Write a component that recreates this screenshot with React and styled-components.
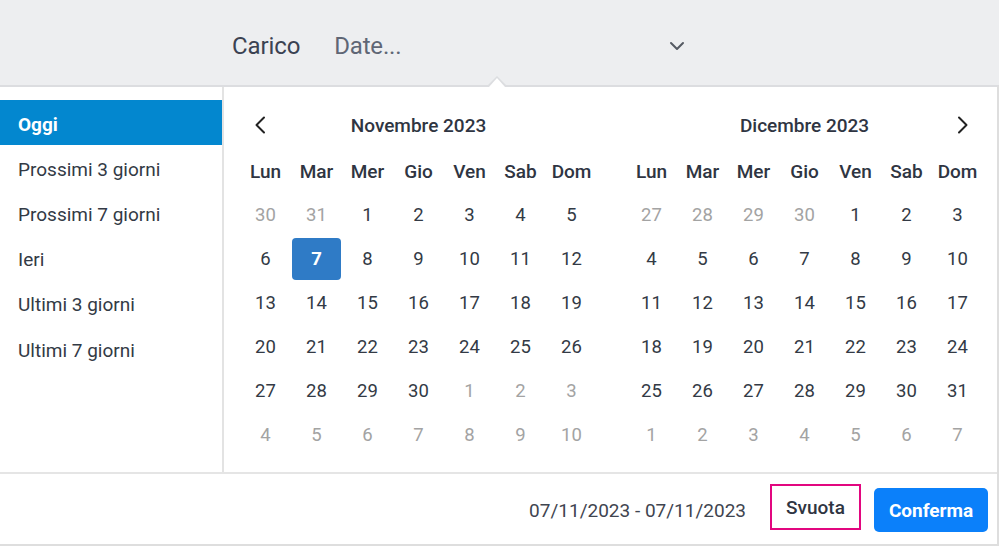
import React from "react";
import styled, { createGlobalStyle } from "styled-components";

const Global = createGlobalStyle`
  html, body { margin: 0; padding: 0; background: #ffffff; }
  body { font-family: Roboto, "Liberation Sans", Arial, sans-serif; }
  * { box-sizing: border-box; }
`;

const Page = styled.div`
  width: 999px;
  height: 549px;
  overflow: hidden;
  background: #ffffff;
`;

const TopBar = styled.div`
  height: 85px;
  background: #edeef0;
  display: flex;
  align-items: center;
  padding: 6px 0 0 232px;
`;

const FieldLabel = styled.span`
  font-size: 24px;
  color: #3b4252;
  margin-right: 34px;
  letter-spacing: -0.1px;
`;

const Select = styled.div`
  width: 352px;
  display: flex;
  align-items: center;
  justify-content: space-between;
  padding-right: 1px;
`;

const Placeholder = styled.span`
  font-size: 24px;
  color: #5f6675;
  letter-spacing: -0.2px;
`;

const Popup = styled.div`
  position: relative;
  width: 999px;
  border-top: 2px solid #dcdde0;
  border-right: 2px solid #dedede;
  border-bottom: 2px solid #dedede;
  background: #ffffff;
`;

const Caret = styled.div`
  position: absolute;
  left: 487px;
  top: -11px;
  width: 0;
  height: 0;
  border-left: 10px solid transparent;
  border-right: 10px solid transparent;
  border-bottom: 10px solid #dcdde0;

  &::after {
    content: "";
    position: absolute;
    left: -8px;
    top: 2px;
    border-left: 8px solid transparent;
    border-right: 8px solid transparent;
    border-bottom: 9px solid #ffffff;
  }
`;

const Body = styled.div`
  display: flex;
  height: 385px;
`;

const Sidebar = styled.ul`
  list-style: none;
  margin: 0;
  padding: 13px 0 0 0;
  width: 224px;
  flex: 0 0 224px;
  border-right: 2px solid #e3e3e3;
`;

const RangeItem = styled.li`
  height: 45.2px;
  display: flex;
  align-items: center;
  padding: 3px 0 0 18px;
  font-size: 19px;
  color: ${(p) => (p.$active ? "#ffffff" : "#333a45")};
  background: ${(p) => (p.$active ? "#0387cf" : "transparent")};
  font-weight: ${(p) => (p.$active ? 700 : 400)};
`;

const Calendars = styled.div`
  display: flex;
  gap: 29px;
  padding: 13px 0 0 16px;
`;

const Month = styled.div`
  width: 357px;
`;

const MonthHeader = styled.div`
  height: 50px;
  display: grid;
  grid-template-columns: 40px 1fr 40px;
  align-items: center;
`;

const MonthTitle = styled.div`
  text-align: center;
  font-size: 19px;
  font-weight: 500;
  color: #2f3542;
`;

const NavButton = styled.button`
  border: none;
  background: none;
  padding: 0;
  width: 40px;
  height: 40px;
  display: flex;
  align-items: center;
  justify-content: center;
  color: #222;
  cursor: pointer;
`;

const Grid = styled.div`
  display: grid;
  grid-template-columns: repeat(7, 51px);
`;

const DayName = styled.div`
  height: 43px;
  display: flex;
  align-items: center;
  justify-content: center;
  font-size: 19px;
  font-weight: 500;
  color: #2f3542;
`;

const Day = styled.div`
  display: flex;
  align-items: center;
  justify-content: center;
  font-size: 18.5px;
  color: ${(p) => (p.$selected ? "#ffffff" : p.$muted ? "#a3a3a3" : "#333a45")};
  background: ${(p) => (p.$selected ? "#2f7bc6" : "transparent")};
  font-weight: ${(p) => (p.$selected ? 700 : 400)};
  border-radius: 4px;
  margin: ${(p) => (p.$selected ? "1px" : "0")};
  height: ${(p) => (p.$selected ? "42px" : "44px")};
`;

const Footer = styled.div`
  height: 72px;
  border-top: 2px solid #e5e5e5;
  display: flex;
  align-items: center;
  justify-content: flex-end;
  padding-right: 9px;
`;

const RangeText = styled.span`
  font-size: 19px;
  color: #3f4550;
  margin-right: 24px;
  padding-top: 2px;
`;

const ClearButton = styled.button`
  height: 46px;
  width: 91px;
  border: 2px solid #e2067f;
  background: #ffffff;
  font-family: inherit;
  font-size: 19px;
  font-weight: 500;
  color: #2f3542;
  margin-right: 13px;
  padding: 0;
  margin-top: -4px;
`;

const ConfirmButton = styled.button`
  height: 44px;
  width: 114px;
  border: none;
  border-radius: 5px;
  background: #0b80fa;
  font-family: inherit;
  font-size: 19px;
  font-weight: 700;
  color: #ffffff;
  padding: 0;
  margin-top: 2px;
`;

const Chevron = ({ dir }) => (
  <svg width="14" height="18" viewBox="0 0 14 18" fill="none">
    <path
      d={dir === "left" ? "M11 1.5 L3.5 9 L11 16.5" : "M3 1.5 L10.5 9 L3 16.5"}
      stroke="#222"
      strokeWidth="2"
      strokeLinecap="round"
      strokeLinejoin="round"
    />
  </svg>
);

const DownChevron = () => (
  <svg width="16" height="10" viewBox="0 0 16 10" fill="none">
    <path d="M2 2 L8 8 L14 2" stroke="#555a63" strokeWidth="2" strokeLinecap="round" strokeLinejoin="round" />
  </svg>
);

const dayNames = ["Lun", "Mar", "Mer", "Gio", "Ven", "Sab", "Dom"];

function buildDays(prevTail, count, nextCount) {
  const days = [];
  prevTail.forEach((d) => days.push({ d, muted: true }));
  for (let i = 1; i <= count; i++) days.push({ d: i, muted: false });
  for (let i = 1; i <= nextCount; i++) days.push({ d: i, muted: true });
  return days;
}

const months = [
  { title: "Novembre 2023", nav: "left", days: buildDays([30, 31], 30, 10), selected: 7 },
  { title: "Dicembre 2023", nav: "right", days: buildDays([27, 28, 29, 30], 31, 7), selected: null },
];

const ranges = ["Oggi", "Prossimi 3 giorni", "Prossimi 7 giorni", "Ieri", "Ultimi 3 giorni", "Ultimi 7 giorni"];

export default function App() {
  return (
    <Page>
      <Global />
      <TopBar>
        <FieldLabel>Carico</FieldLabel>
        <Select>
          <Placeholder>Date...</Placeholder>
          <DownChevron />
        </Select>
      </TopBar>
      <Popup>
        <Caret />
        <Body>
          <Sidebar>
            {ranges.map((r, i) => (
              <RangeItem key={r} $active={i === 0}>
                {r}
              </RangeItem>
            ))}
          </Sidebar>
          <Calendars>
            {months.map((m) => (
              <Month key={m.title}>
                <MonthHeader>
                  {m.nav === "left" ? (
                    <NavButton aria-label="Mese precedente">
                      <Chevron dir="left" />
                    </NavButton>
                  ) : (
                    <span />
                  )}
                  <MonthTitle>{m.title}</MonthTitle>
                  {m.nav === "right" ? (
                    <NavButton aria-label="Mese successivo">
                      <Chevron dir="right" />
                    </NavButton>
                  ) : (
                    <span />
                  )}
                </MonthHeader>
                <Grid>
                  {dayNames.map((n) => (
                    <DayName key={n}>{n}</DayName>
                  ))}
                  {m.days.map((day, i) => (
                    <Day
                      key={i}
                      $muted={day.muted}
                      $selected={!day.muted && day.d === m.selected}
                    >
                      {day.d}
                    </Day>
                  ))}
                </Grid>
              </Month>
            ))}
          </Calendars>
        </Body>
        <Footer>
          <RangeText>07/11/2023 - 07/11/2023</RangeText>
          <ClearButton>Svuota</ClearButton>
          <ConfirmButton>Conferma</ConfirmButton>
        </Footer>
      </Popup>
    </Page>
  );
}
